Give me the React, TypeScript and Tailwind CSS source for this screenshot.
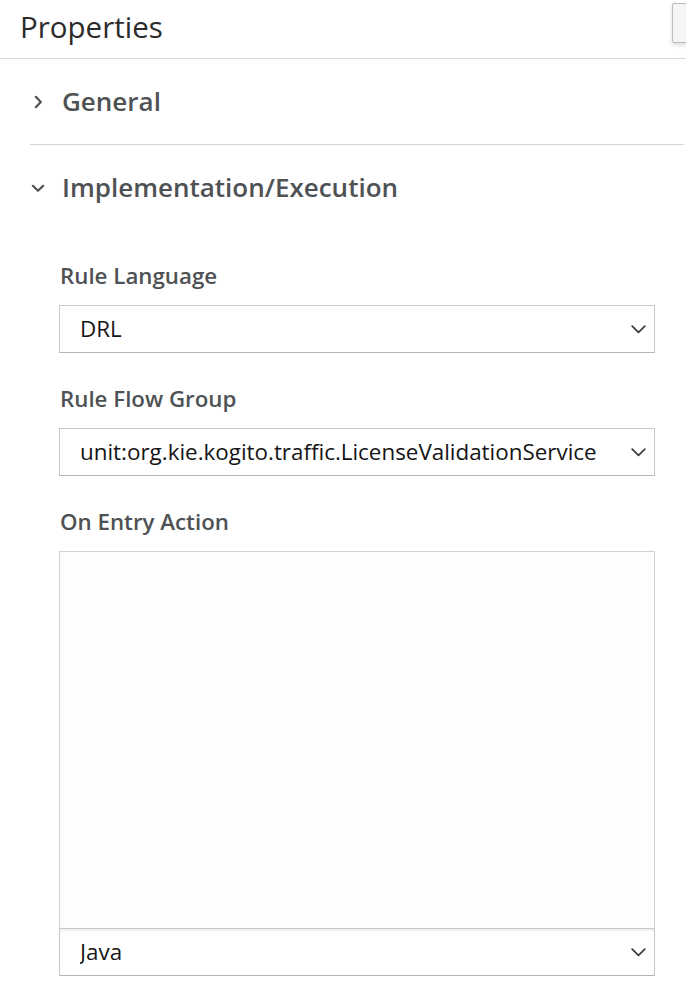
import React from "react"

const font = { fontFamily: '"Open Sans", "Noto Sans", sans-serif' }

function ChevronDown() {
  return (
    <svg width="15" height="9" viewBox="0 0 15 9" fill="none" className="shrink-0">
      <path d="M1.2 1.2 L7.5 7.3 L13.8 1.2" stroke="#3c3f42" strokeWidth="1.8" strokeLinecap="round" strokeLinejoin="round" />
    </svg>
  )
}

function SectionChevron({ open }: { open: boolean }) {
  return open ? (
    <svg width="14" height="9" viewBox="0 0 14 9" fill="none">
      <path d="M1.8 1.8 L7 6.8 L12.2 1.8" stroke="#4f5255" strokeWidth="2.2" strokeLinecap="round" strokeLinejoin="round" />
    </svg>
  ) : (
    <svg width="9" height="14" viewBox="0 0 9 14" fill="none">
      <path d="M1.8 1.8 L6.8 7 L1.8 12.2" stroke="#4f5255" strokeWidth="2.2" strokeLinecap="round" strokeLinejoin="round" />
    </svg>
  )
}

function Select({ value, className = "" }: { value: string; className?: string }) {
  return (
    <div
      className={
        "flex h-[48px] items-center justify-between border border-[#c8c8c8] border-b-[#b5b5b5] bg-white pl-[20px] pr-[8px] text-[22.4px] text-[#151515] " +
        className
      }
    >
      <span className="truncate">{value}</span>
      <ChevronDown />
    </div>
  )
}

function Field({ label, children }: { label: string; children: React.ReactNode }) {
  return (
    <div className="flex flex-col">
      <div className="mb-[14px] h-[28px] pl-[1px] text-[22.3px] font-semibold leading-[25px] text-[#4f5255]">{label}</div>
      {children}
    </div>
  )
}

export default function App() {
  return (
    <div className="h-[1007px] w-[686px] overflow-hidden bg-white" style={font}>
      {/* Header */}
      <div className="flex h-[59px] items-start justify-between overflow-hidden border-b border-[#d9d9d9]">
        <h1 className="pl-[20px] pt-[7px] text-[29.5px] font-normal leading-[40px] text-[#2b2b2b]">Properties</h1>
        <div className="mt-[3px] -mr-[26px] h-[40px] w-[40px] shrink-0 rounded-[2px] border border-[#bdbdbd] bg-[#f5f5f5] shadow-[0_2px_4px_rgba(0,0,0,0.15)]" />
      </div>

      {/* General */}
      <div className="ml-[30px] mr-[2px] flex h-[86px] items-center border-b border-[#d5d5d5]">
        <div className="flex w-[16px] justify-center">
          <SectionChevron open={false} />
        </div>
        <span className="ml-[16px] text-[26px] font-semibold text-[#4f5255]">General</span>
      </div>

      {/* Implementation/Execution */}
      <div className="ml-[30px] mr-[2px] flex h-[86px] items-center">
        <div className="flex w-[16px] justify-center">
          <SectionChevron open={true} />
        </div>
        <span className="ml-[16px] pb-[1px] text-[26px] font-semibold text-[#4f5255]">Implementation/Execution</span>
      </div>

      <div className="ml-[59px] mr-[31px] mt-[32px] flex flex-col gap-[33px]">
        <Field label="Rule Language">
          <Select value="DRL" />
        </Field>
        <Field label="Rule Flow Group">
          <Select value="unit:org.kie.kogito.traffic.LicenseValidationService" />
        </Field>
        <Field label="On Entry Action">
          <div className="flex flex-col">
            <div className="h-[378px] border border-[#d2d2d2] bg-[#fdfdfb]" />
            <Select value="Java" className="-mt-px shadow-[inset_0_2px_2px_rgba(0,0,0,0.06)]" />
          </div>
        </Field>
      </div>
    </div>
  )
}
